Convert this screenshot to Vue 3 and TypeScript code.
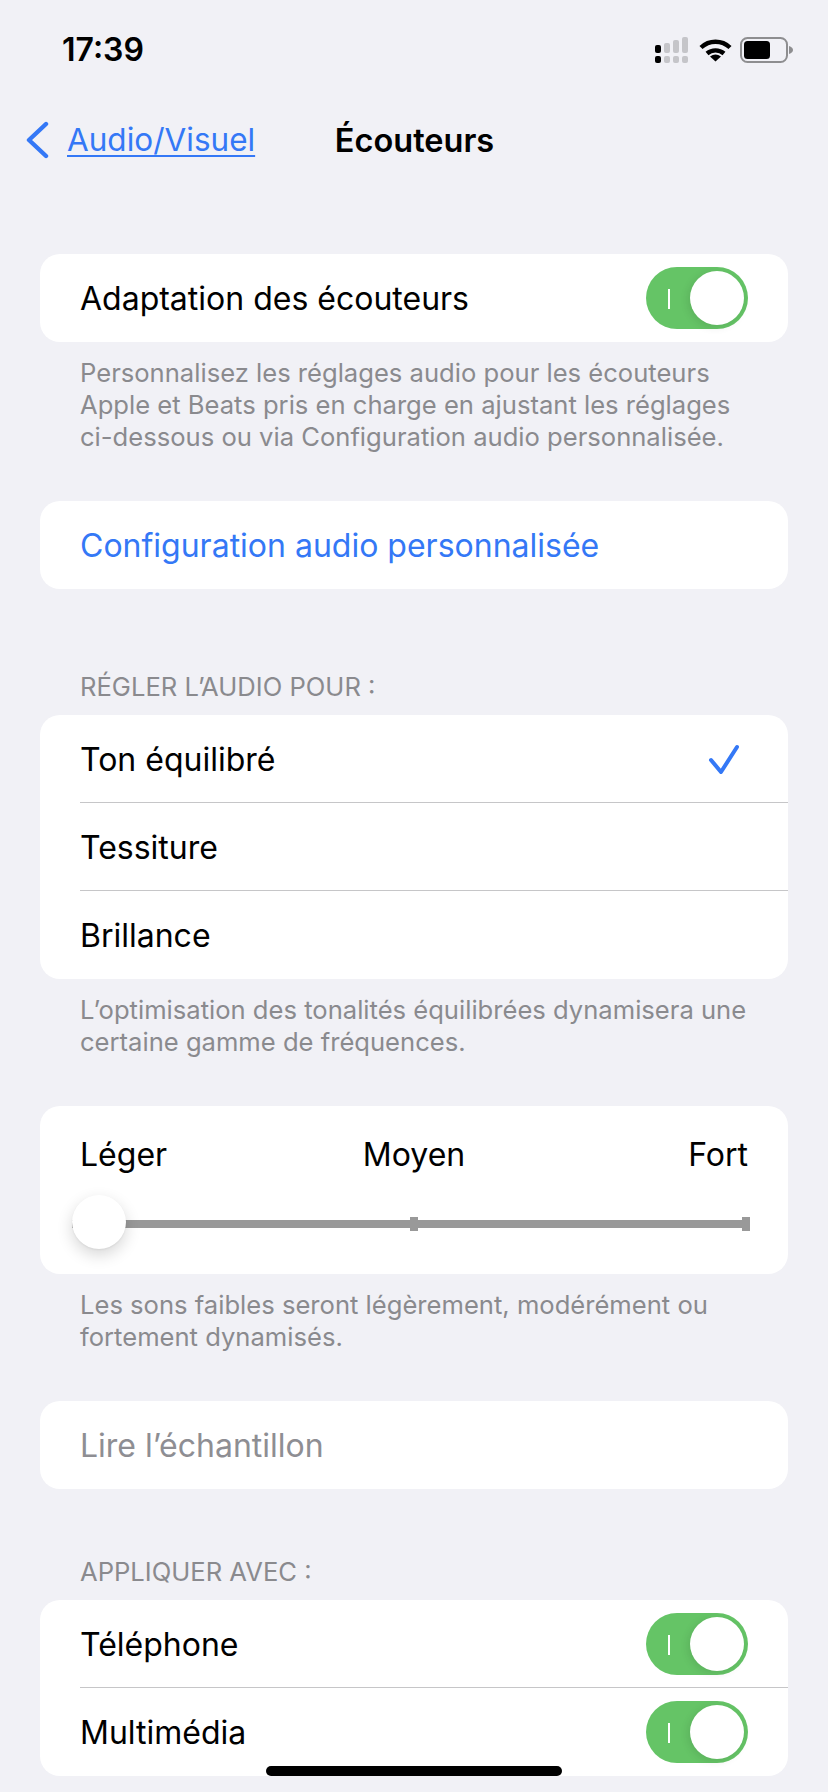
<script setup lang="ts">
const lowBars = [0, 9, 18, 27]
const upperBars = [
  { x: 0, y: 9, h: 8, c: '#000' },
  { x: 9, y: 7, h: 10, c: '#c5c5c9' },
  { x: 18, y: 4, h: 13, c: '#c5c5c9' },
  { x: 27, y: 1, h: 16, c: '#c5c5c9' },
]
const applyRows = ['Téléphone', 'Multimédia']
</script>

<template>
  <div class="page">
    <header class="status">
      <span class="time">17:39</span>
      <div class="status-icons">
        <svg class="cell" width="33" height="28" viewBox="0 0 33 28">
          <rect v-for="b in upperBars" :key="b.x" :x="b.x" :y="b.y" width="6" :height="b.h" rx="2" :fill="b.c" />
          <rect v-for="(x, i) in lowBars" :key="x" :x="x" y="20" width="6" height="7" rx="2" :fill="i === 0 ? '#000' : '#c5c5c9'" />
        </svg>
        <svg class="wifi" width="33" height="25" viewBox="0 0 33 25">
          <path d="M2 10.5 A21 21 0 0 1 31 10.5" fill="none" stroke="#000" stroke-width="4.4" />
          <path d="M8 16.5 A13 13 0 0 1 25 16.5" fill="none" stroke="#000" stroke-width="4.4" />
          <path d="M11 19.5 Q16.5 15.5 22 19.5 L16.5 24.5 Z" fill="#000" />
        </svg>
        <svg class="battery" width="54" height="26" viewBox="0 0 54 26">
          <rect x="1" y="1" width="46" height="24" rx="6.5" fill="none" stroke="#8e8e90" stroke-width="2" />
          <rect x="4" y="4" width="26" height="18" rx="3.5" fill="#000" />
          <path d="M49 9 Q53 10.5 53 13 Q53 15.5 49 17 Z" fill="#8e8e90" />
        </svg>
      </div>
    </header>

    <nav class="nav">
      <a class="back">
        <svg width="24" height="38" viewBox="0 0 24 38">
          <path d="M21 3 L4 19 L21 35" fill="none" stroke="#3478f6" stroke-width="4.4" stroke-linecap="round" stroke-linejoin="round" />
        </svg>
        <span class="back-label">Audio/Visuel</span>
      </a>
      <h1 class="title">Écouteurs</h1>
      <span></span>
    </nav>

    <main class="content">
      <section class="card first">
        <div class="row">
          <span>Adaptation des écouteurs</span>
          <span class="switch"><i class="mark"></i><i class="knob"></i></span>
        </div>
      </section>
      <p class="note">Personnalisez les réglages audio pour les écouteurs Apple et Beats pris en charge en ajustant les réglages ci-dessous ou via Configuration audio personnalisée.</p>

      <section class="card gap">
        <div class="row link">Configuration audio personnalisée</div>
      </section>

      <h2 class="caption cap-a">RÉGLER L’AUDIO POUR :</h2>
      <section class="card">
        <div class="row">
          <span>Ton équilibré</span>
          <svg class="check" width="32" height="32" viewBox="0 0 32 32">
            <path d="M3 17 L13 29 L29 4" fill="none" stroke="#3478f6" stroke-width="4" stroke-linecap="round" stroke-linejoin="round" />
          </svg>
        </div>
        <div class="row sep">Tessiture</div>
        <div class="row sep">Brillance</div>
      </section>
      <p class="note">L’optimisation des tonalités équilibrées dynamisera une certaine gamme de fréquences.</p>

      <section class="card gap slider-card">
        <div class="levels">
          <span>Léger</span>
          <span>Moyen</span>
          <span class="level-end">Fort</span>
        </div>
        <div class="track">
          <i class="tick mid"></i>
          <i class="tick end"></i>
          <i class="thumb"></i>
        </div>
      </section>
      <p class="note">Les sons faibles seront légèrement, modérément ou fortement dynamisés.</p>

      <section class="card gap">
        <div class="row muted">Lire l’échantillon</div>
      </section>

      <h2 class="caption cap-b">APPLIQUER AVEC :</h2>
      <section class="card">
        <div v-for="(r, i) in applyRows" :key="r" class="row" :class="{ sep: i > 0 }">
          <span>{{ r }}</span>
          <span class="switch"><i class="mark"></i><i class="knob"></i></span>
        </div>
      </section>
    </main>

    <div class="home"></div>
  </div>
</template>

<style>
html, body { margin: 0; background: #f2f2f7; }
</style>

<style scoped>
.page {
  position: relative;
  width: 828px;
  height: 1792px;
  overflow: hidden;
  background: #f1f1f6;
  color: #000;
  font-family: Inter, "Liberation Sans", sans-serif;
}
.status {
  height: 100px;
  display: flex;
  justify-content: space-between;
  align-items: flex-start;
  box-sizing: border-box;
  padding: 30px 34px 0 62px;
}
.time { font-size: 32px; line-height: 40px; font-weight: 600; }
.status-icons { display: flex; align-items: flex-start; padding-top: 5px; }
.cell { margin-top: 1px; margin-right: 11px; }
.wifi { margin-top: 2px; margin-right: 8px; }
.battery { margin-top: 2px; }
.nav {
  height: 80px;
  display: grid;
  grid-template-columns: minmax(0, 1fr) auto minmax(0, 1fr);
  align-items: center;
  padding: 0 25px;
}
.back { display: flex; align-items: center; gap: 18px; color: #3478f6; }
.back-label { font-size: 31.5px; line-height: 40px; text-decoration: underline; text-underline-offset: 4px; text-decoration-thickness: 2px; white-space: nowrap; }
.title { margin: 2px 0 0 1px; font-size: 32.5px; line-height: 40px; font-weight: 600; }
.content { margin: 0 40px; }
.card { background: #fff; border-radius: 20px; overflow: hidden; font-size: 32px; }
.first { margin-top: 74px; }
.row {
  height: 88px;
  box-sizing: border-box;
  position: relative;
  display: flex;
  align-items: center;
  justify-content: space-between;
  padding: 0 40px;
}
.sep::before {
  content: "";
  position: absolute;
  left: 40px;
  right: 0;
  top: -1px;
  height: 1px;
  background: #c6c6c8;
}
.link { color: #3478f6; }
.muted { color: #8e8e93; }
.note {
  margin: 15px 30px 0 40px;
  font-size: 25.6px;
  line-height: 32px;
  color: #8a8a8e;
}
.gap { margin-top: 48px; }
.caption { margin: 0 0 12px 40px; font-size: 25.6px; line-height: 32px; font-weight: 400; color: #8a8a8e; }
.cap-a { margin-top: 82px; }
.cap-b { margin-top: 67px; }
.check { margin-right: 8px; }
.switch {
  position: relative;
  width: 102px;
  height: 62px;
  margin-left: auto;
  border-radius: 31px;
  background: #65c466;
  flex: none;
}
.mark { position: absolute; left: 22px; top: 22px; width: 2px; height: 20px; background: #fff; }
.knob {
  position: absolute;
  right: 4px;
  top: 4px;
  width: 54px;
  height: 54px;
  border-radius: 50%;
  background: #fff;
  box-shadow: -2px 2px 8px rgba(0, 0, 0, 0.1);
}
.slider-card { height: 168px; box-sizing: border-box; padding: 29px 40px 0; }
.levels { display: grid; grid-template-columns: minmax(0, 1fr) auto minmax(0, 1fr); line-height: 40px; }
.level-end { justify-self: end; }
.track {
  position: relative;
  height: 8px;
  margin: 45px -2px 0 -8px;
  background: #999;
}
.tick { position: absolute; top: -3px; width: 8px; height: 14px; background: #999; }
.mid { left: 338px; }
.end { right: 0; }
.thumb {
  position: absolute;
  left: 0;
  top: -25px;
  width: 54px;
  height: 54px;
  border-radius: 50%;
  background: #fff;
  box-shadow: 0 6px 16px rgba(0, 0, 0, 0.16), 0 1px 2px rgba(0, 0, 0, 0.06);
}
.home {
  position: absolute;
  left: 266px;
  bottom: 16px;
  width: 296px;
  height: 10px;
  border-radius: 5px;
  background: #000;
}
</style>
